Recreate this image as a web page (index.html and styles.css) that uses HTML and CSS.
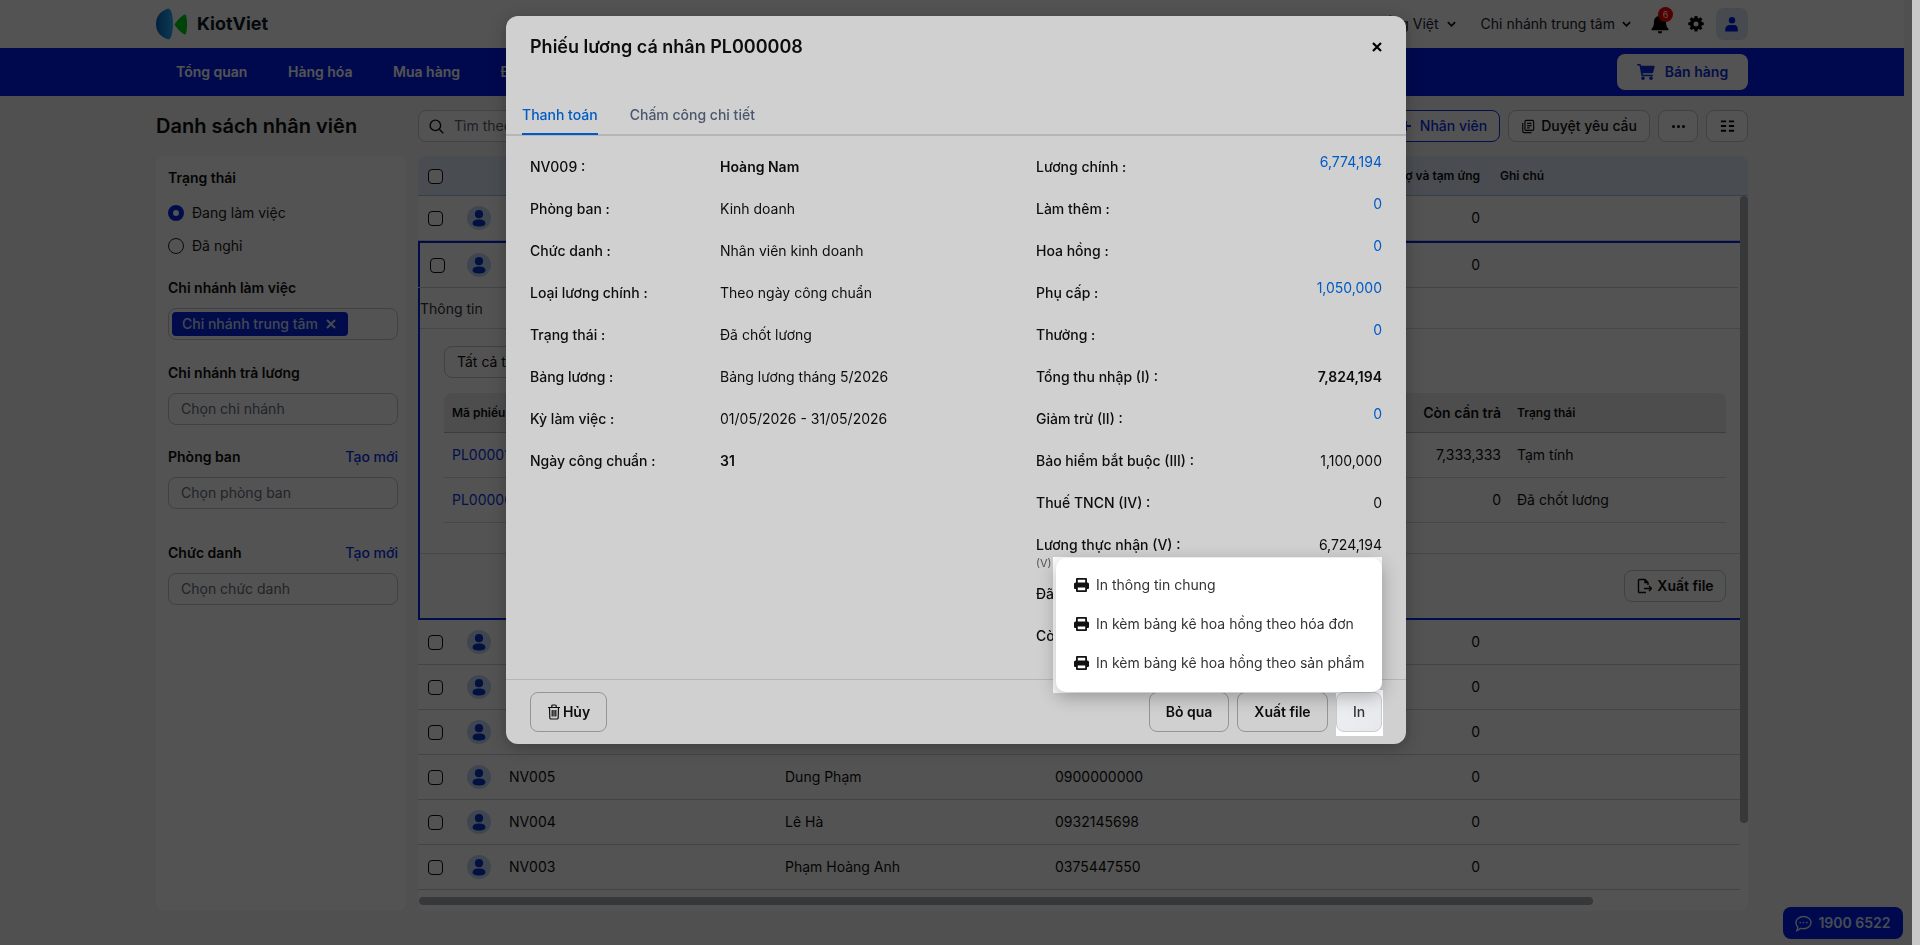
FILE: index.html
```html
<!DOCTYPE html>
<html lang="vi">
<head>
<meta charset="utf-8">
<title>KiotViet - Danh sách nhân viên</title>
<link rel="stylesheet" href="styles.css">
</head>
<body>
<svg class="defs" aria-hidden="true">
  <symbol id="i-person" viewBox="0 0 24 24"><circle cx="12" cy="8.2" r="4.1"/><path d="M5.6 17.4c0-2.6 2.2-3.9 6.4-3.9s6.4 1.3 6.4 3.9c0 2-2.400 3-6.400 3s-6.400-1-6.400-3z"/></symbol>
  <symbol id="i-print" viewBox="0 0 15 14"><path fill-rule="evenodd" d="M3 0h9a1 1 0 0 1 1 1v3.500h.5A1.500 1.500 0 0 1 15 6v4a1 1 0 0 1-1 1h-1v2a1 1 0 0 1-1 1H3a1 1 0 0 1-1-1v-2H1a1 1 0 0 1-1-1V6a1.500 1.500 0 0 1 1.500-1.500H2V1a1 1 0 0 1 1-1zM3.800 1.700v2.800h7.400V1.700zM3.800 9.500v2.800h7.400V9.500z"/></symbol>
</svg>

<div class="page">
  <header class="topbar">
    <div class="brand">
      <svg class="logo" viewBox="0 0 33 32"><defs><linearGradient id="lg" x1="0" y1="0" x2="1" y2="0"><stop offset="0" stop-color="#0068c0"/><stop offset="1" stop-color="#30b0ff"/></linearGradient></defs><path fill="url(#lg)" d="M13 0c3 1 4.500 8 4.500 16S16 31 13 32C5 30 0 24 0 16S5 2 13 0z"/><path fill="#00d020" d="M31 7c1.500 6 1.500 12 0 19-1 1-2 1-3 0-3-2-6-5-9-9.500 3-4.500 6-7.500 9-9.500 1-1 2-1 3 0z"/></svg>
      <span class="brand-name">KiotViet</span>
    </div>
    <div class="top-right">
      <svg class="top-promo"><use href="#i-person"/></svg>
      <span class="top-select">Tiếng Việt <svg class="chev" viewBox="0 0 10 6"><path d="M1 1l4 4 4-4" /></svg></span>
      <span class="top-select">Chi nhánh trung tâm <svg class="chev" viewBox="0 0 10 6"><path d="M1 1l4 4 4-4" /></svg></span>
      <span class="bell">
        <svg viewBox="0 0 18 20"><path d="M9 0a1.400 1.400 0 0 1 1.400 1.400v.7A5.800 5.800 0 0 1 15 7.800c0 4.400 1.200 5.800 2.400 7 .5.500.2 1.400-.6 1.400H1.200c-.8 0-1.100-.9-.6-1.400 1.200-1.200 2.400-2.600 2.400-7a5.800 5.800 0 0 1 4.600-5.700v-.7A1.400 1.400 0 0 1 9 0zM6.800 17.300h4.400a2.200 2.200 0 0 1-4.400 0z"/></svg>
        <span class="badge">6</span>
      </span>
      <svg class="gear" viewBox="0 0 16 16"><path fill-rule="evenodd" d="M6.700 0h2.600l.4 2.100 1 .4 1.800-1.200 1.900 1.900-1.200 1.800.4 1 2.100.4v2.600l-2.100.5-.4 1 1.200 1.700-1.900 1.900-1.800-1.200-1 .4-.4 2.200H6.700l-.4-2.200-1-.4-1.800 1.200-1.900-1.900 1.200-1.700-.4-1-2.100-.5V6.400l2.100-.4.4-1-1.200-1.800 1.900-1.900 1.800 1.200 1-.4zM8 5.500a2.500 2.500 0 1 0 0 5 2.500 2.500 0 0 0 0-5z"/></svg>
      <span class="user-box"><svg viewBox="0 0 16 16"><circle cx="8" cy="4.200" r="3.200"/><path d="M1.200 15v-1.500C1.200 10.500 3.500 9 5.500 9h5c2 0 3.300 1.500 3.300 4.500V15c0 .4-.3.600-.6.600H1.800c-.3 0-.6-.2-.6-.6z"/></svg></span>
    </div>
  </header>

  <nav class="navbar">
    <div class="nav-items">
      <a>Tổng quan</a><a>Hàng hóa</a><a>Mua hàng</a><a>Đơn hàng</a>
    </div>
    <button class="sell-btn">
      <svg viewBox="0 0 18 16"><path d="M0 .8C0 .4.300 0 .8 0h2c.6 0 1 .4 1.200 1l.2.800h12.500c.6 0 1.100.6.900 1.200l-1.500 5.500c-.1.500-.6.800-1.100.8H5.600l.3 1.400h9.400a.8.8 0 0 1 0 1.600H5.200c-.4 0-.7-.3-.8-.6L2.500 1.600H.8C.3 1.600 0 1.200 0 .8z"/><circle cx="6" cy="14.300" r="1.700"/><circle cx="14" cy="14.300" r="1.700"/></svg>
      Bán hàng
    </button>
  </nav>

  <main class="content">
    <div class="title-row">
      <h1>Danh sách nhân viên</h1>
      <div class="toolbar">
        <label class="search">
          <svg viewBox="0 0 16 16"><circle cx="6.800" cy="6.800" r="5.600"/><path d="M11 11l4.200 4.200"/></svg>
          <span>Tìm theo mã, tên nhân viên</span>
        </label>
        <div class="tool-group">
          <button class="btn btn-blue"><svg viewBox="0 0 12 12"><path d="M6 1v10M1 6h10"/></svg>Nhân viên</button>
          <button class="btn">
            <svg class="ic-doc" viewBox="0 0 16 16"><rect x="4.500" y="1" width="10" height="11.500" rx="1.500"/><path d="M2 4v9.500A1.500 1.500 0 0 0 3.500 15H12M7 4.500h5M7 7h5M7 9.500h3"/></svg>
            Duyệt yêu cầu
          </button>
          <button class="btn btn-sq dots"><i></i><i></i><i></i></button>
          <button class="btn btn-sq cols"><svg viewBox="0 0 16 14"><path d="M1 2h5.500M9.500 2H15M1 7h5.500M9.500 7H15M1 12h5.500M9.500 12H15"/></svg></button>
        </div>
      </div>
    </div>

    <div class="workspace">
      <aside class="filters">
        <h3 class="f-title">Trạng thái</h3>
        <div class="radio on"><i></i>Đang làm việc</div>
        <div class="radio"><i></i>Đã nghỉ</div>

        <h3 class="f-title g-work">Chi nhánh làm việc</h3>
        <div class="tagbox"><span class="tag">Chi nhánh trung tâm <svg viewBox="0 0 10 10"><path d="M1 1l8 8M9 1L1 9"/></svg></span></div>

        <h3 class="f-title g-pay">Chi nhánh trả lương</h3>
        <div class="input">Chọn chi nhánh</div>

        <div class="f-head g-dept"><h3 class="f-title">Phòng ban</h3><a>Tạo mới</a></div>
        <div class="input">Chọn phòng ban</div>

        <div class="f-head g-role"><h3 class="f-title">Chức danh</h3><a>Tạo mới</a></div>
        <div class="input">Chọn chức danh</div>
      </aside>

      <section class="table">
        <div class="t-head row-grid">
          <span class="cb"></span><span></span><span></span><span></span><span></span>
          <span class="num">Nợ và tạm ứng</span><span class="note">Ghi chú</span>
        </div>
        <div class="t-row row-grid"><span class="cb"></span><svg class="ava"><use href="#i-person"/></svg><span></span><span></span><span></span><span class="num">0</span></div>

        <div class="expanded">
          <div class="t-row row-grid first"><span class="cb"></span><svg class="ava"><use href="#i-person"/></svg><span></span><span></span><span></span><span class="num">0</span></div>
          <div class="d-tabs">Thông tin</div>
          <div class="d-body">
            <div class="d-select">Tất cả trạng thái</div>
            <div class="d-table">
              <div class="d-head d-grid"><span>Mã phiếu</span><b class="num">Còn cần trả</b><span>Trạng thái</span></div>
              <div class="d-row d-grid"><a>PL000010</a><span class="num">7,333,333</span><span>Tạm tính</span></div>
              <div class="d-row d-grid"><a>PL000008</a><span class="num">0</span><span>Đã chốt lương</span></div>
            </div>
          </div>
          <div class="d-foot">
            <button class="btn btn-export">
              <svg viewBox="0 0 16 16"><path d="M10 14.500H3.500a1 1 0 0 1-1-1v-11a1 1 0 0 1 1-1h5.500L12 4.500V7M9 1.500v3h3M8 10.500h7.500M13 8l2.500 2.500L13 13"/></svg>
              Xuất file
            </button>
          </div>
        </div>

        <div class="t-row row-grid"><span class="cb"></span><svg class="ava"><use href="#i-person"/></svg><span></span><span></span><span></span><span class="num">0</span></div>
        <div class="t-row row-grid"><span class="cb"></span><svg class="ava"><use href="#i-person"/></svg><span></span><span></span><span></span><span class="num">0</span></div>
        <div class="t-row row-grid"><span class="cb"></span><svg class="ava"><use href="#i-person"/></svg><span></span><span></span><span></span><span class="num">0</span></div>
        <div class="t-row row-grid"><span class="cb"></span><svg class="ava"><use href="#i-person"/></svg><span>NV005</span><span>Dung Phạm</span><span>0900000000</span><span class="num">0</span></div>
        <div class="t-row row-grid"><span class="cb"></span><svg class="ava"><use href="#i-person"/></svg><span>NV004</span><span>Lê Hà</span><span>0932145698</span><span class="num">0</span></div>
        <div class="t-row row-grid"><span class="cb"></span><svg class="ava"><use href="#i-person"/></svg><span>NV003</span><span>Phạm Hoàng Anh</span><span>0375447550</span><span class="num">0</span></div>
        <div class="sb-v"></div>
        <div class="sb-h"></div>
      </section>
    </div>
  </main>

  <button class="chat">
    <svg viewBox="0 0 18 18"><path d="M9 1.500c4.400 0 8 2.900 8 6.500s-3.600 6.500-8 6.500c-1 0-1.900-.1-2.800-.4L2 16.500l1-3.700C1.800 11.600 1 9.900 1 8c0-3.600 3.600-6.500 8-6.500z"/><circle class="dot" cx="5.500" cy="8" r=".9"/><circle class="dot" cx="9" cy="8" r=".9"/><circle class="dot" cx="12.500" cy="8" r=".9"/></svg>
    1900 6522
  </button>
</div>
<div class="rail"></div>

<div class="scrim-page"></div>

<div class="modal">
  <div class="m-head">
    <h2>Phiếu lương cá nhân PL000008</h2>
    <svg class="m-close" viewBox="0 0 10 10"><path d="M1 1l8 8M9 1L1 9"/></svg>
  </div>
  <div class="m-tabs">
    <a class="active">Thanh toán</a><a>Chấm công chi tiết</a>
  </div>
  <div class="m-body">
    <dl class="col-left">
      <div><dt>NV009 :</dt><dd class="strong">Hoàng Nam</dd></div>
      <div><dt>Phòng ban :</dt><dd>Kinh doanh</dd></div>
      <div><dt>Chức danh :</dt><dd>Nhân viên kinh doanh</dd></div>
      <div><dt>Loại lương chính :</dt><dd>Theo ngày công chuẩn</dd></div>
      <div><dt>Trạng thái :</dt><dd>Đã chốt lương</dd></div>
      <div><dt>Bảng lương :</dt><dd>Bảng lương tháng 5/2026</dd></div>
      <div><dt>Kỳ làm việc :</dt><dd>01/05/2026 - 31/05/2026</dd></div>
      <div><dt>Ngày công chuẩn :</dt><dd class="strong">31</dd></div>
    </dl>
    <dl class="col-right">
      <div><dt>Lương chính :</dt><dd class="link">6,774,194</dd></div>
      <div><dt>Làm thêm :</dt><dd class="link">0</dd></div>
      <div><dt>Hoa hồng :</dt><dd class="link">0</dd></div>
      <div><dt>Phụ cấp :</dt><dd class="link">1,050,000</dd></div>
      <div><dt>Thưởng :</dt><dd class="link">0</dd></div>
      <div><dt>Tổng thu nhập (I) :</dt><dd class="strong">7,824,194</dd></div>
      <div><dt>Giảm trừ (II) :</dt><dd class="link">0</dd></div>
      <div><dt>Bảo hiểm bắt buộc (III) :</dt><dd>1,100,000</dd></div>
      <div><dt>Thuế TNCN (IV) :</dt><dd>0</dd></div>
      <div class="row-note"><dt>Lương thực nhận (V) :<small>(V) = (I) - (II) - (III) - (IV)</small></dt><dd>6,724,194</dd></div>
      <div><dt>Đã thanh toán :</dt><dd></dd></div>
      <div><dt>Còn cần trả :</dt><dd></dd></div>
    </dl>
  </div>
  <div class="m-foot">
    <button class="btn m-btn m-cancel">
      <svg viewBox="0 0 14 16"><path d="M1 3.500h12M4.800 3.500V2a1 1 0 0 1 1-1h2.400a1 1 0 0 1 1 1v1.500M2.500 3.500l.3 10.300a1.200 1.200 0 0 0 1.200 1.200h6a1.200 1.200 0 0 0 1.200-1.200l.3-10.300M5.200 6v6.500M7 6v6.500M8.800 6v6.500"/></svg>
      Hủy
    </button>
    <div class="m-actions">
      <button class="btn m-btn m-skip">Bỏ qua</button>
      <button class="btn m-btn m-file">Xuất file</button>
      <div class="print-spot">
        <button class="btn m-btn print-btn">In</button>
        <ul class="print-menu">
          <li><svg><use href="#i-print"/></svg>In thông tin chung</li>
          <li><svg><use href="#i-print"/></svg>In kèm bảng kê hoa hồng theo hóa đơn</li>
          <li><svg><use href="#i-print"/></svg>In kèm bảng kê hoa hồng theo sản phẩm</li>
        </ul>
      </div>
    </div>
  </div>
</div>

<div class="scrim-focus"></div>
</body>
</html>
```

FILE: styles.css
```css
* { box-sizing: border-box; }
html, body { margin: 0; height: 945px; overflow: hidden; }
body {
  display: flex;
  font: 14px/20px Inter, "Noto Sans", sans-serif;
  color: #111;
  background: #f2f5f3;
}
.defs { display: none; }
button { font: inherit; color: inherit; background: none; border: 0; padding: 0; }
h1, h2, h3, dl, dd, ul { margin: 0; padding: 0; }
a { color: inherit; }

.page { width: 1912px; flex: none; }
.rail { width: 8px; flex: none; background: #f6f6f6; }

/* Top bar */
.topbar {
  width: 1904px; height: 48px; padding: 0 156px;
  display: flex; align-items: center; justify-content: space-between;
  background: #fff;
}
.brand { display: flex; align-items: center; gap: 9px; }
.logo { width: 32px; height: 32px; }
.brand-name { font-size: 18px; font-weight: 700; color: #0d1b2a; }
.top-right { display: flex; align-items: center; }
.top-promo { width: 20px; height: 20px; fill: #0a35e6; margin-right: 251px; }
.top-select { display: flex; align-items: center; gap: 8px; margin-right: 23px; color: #1c2430; }
.top-select + .top-select { margin-left: 2px; gap: 7px; }
.chev { width: 9px; height: 6px; fill: none; stroke: #111; stroke-width: 2; }
.bell { position: relative; display: block; width: 18px; height: 20px; margin: 0 19px 0 -3px; }
.bell svg { display: block; width: 18px; height: 20px; fill: #000; }
.badge {
  position: absolute; left: 7px; top: -7px;
  width: 15px; height: 15px; border-radius: 50%;
  background: #ff0000; color: #fff; font-size: 9px; line-height: 15px; text-align: center;
}
.gear { width: 16px; height: 16px; fill: #000; margin-right: 12px; }
.user-box {
  width: 32px; height: 32px; border-radius: 8px; background: #dce6f7;
  display: flex; align-items: center; justify-content: center;
}
.user-box svg { width: 16px; height: 16px; fill: #001fef; }

/* Nav */
.navbar {
  width: 1904px; height: 48px; padding: 0 156px 0 176px;
  display: flex; align-items: center; justify-content: space-between;
  background: #001fef;
}
.nav-items { display: flex; gap: 40.500px; }
.nav-items a { color: #fff; font-weight: 600; }
.sell-btn {
  width: 131px; height: 36px; border-radius: 8px; background: #fff;
  display: flex; align-items: center; justify-content: center; gap: 10px;
  color: #0f2ee0; font-weight: 600;
}
.sell-btn svg { width: 18px; height: 16px; fill: #0f2ee0; }

/* Content */
.content { width: 1904px; padding: 14px 156px 0; }
.title-row { display: flex; height: 32px; align-items: center; }
h1 { width: 262px; font-size: 20px; line-height: 32px; font-weight: 600; flex: none; }
.toolbar { flex: 1; display: flex; justify-content: space-between; }
.search {
  width: 400px; height: 32px; padding: 0 10px; background: #fff;
  display: flex; align-items: center; gap: 10px;
  border: 1px solid #c9ced6; border-radius: 8px; color: #5b6472;
}
.search svg { width: 15px; height: 15px; fill: none; stroke: #111; stroke-width: 1.500; flex: none; }
.tool-group { display: flex; gap: 8px; }
.btn {
  height: 32px; padding: 0 12px; background: #fff;
  display: inline-flex; align-items: center; gap: 6px;
  border: 1px solid #c3c8d0; border-radius: 8px; font-weight: 500; white-space: nowrap;
}
.btn-blue { width: 120px; justify-content: flex-end; border-color: #0a35e6; color: #0a35e6; padding-right: 12px; gap: 8px; }
.btn-blue svg { width: 12px; height: 12px; fill: none; stroke: #0a35e6; stroke-width: 1.800; flex: none; }
.ic-doc { width: 14px; height: 15px; fill: none; stroke: #111; stroke-width: 1.300; }
.btn-sq { width: 40px; padding: 0; justify-content: center; }
.cols { width: 42px; }
.cols svg { width: 15px; height: 14px; fill: none; stroke: #000; stroke-width: 2; }
.dots { gap: 2px; }
.dots i { width: 3px; height: 3px; border-radius: 50%; background: #000; }

.workspace { display: flex; gap: 12px; margin-top: 14px; height: 755px; }

/* Filters */
.filters { width: 250px; flex: none; padding: 12px 8px 0 12px; border-radius: 8px; background: #fff; }
.f-title { font-size: 14px; line-height: 20px; font-weight: 600; }
.radio { display: flex; align-items: center; gap: 8px; margin-top: 13px; height: 20px; color: #222; }
.f-title + .radio { margin-top: 15px; }
.radio i { width: 16px; height: 16px; border-radius: 50%; border: 1px solid #222; flex: none; background: #fff; }
.radio.on i { background: #fff; border: 5px solid #0a26e8; }
.g-work { margin-top: 22px; }
.tagbox {
  height: 32px; margin-top: 10px; padding: 3px 3px;
  border: 1px solid #c3c8d0; border-radius: 8px;
}
.tag {
  display: inline-flex; align-items: center; gap: 8px; height: 24px; width: 176px; padding: 0 10px;
  border-radius: 4px; background: #0a26e8; color: #c8dcff; font-weight: 500;
}
.tag svg { width: 10px; height: 10px; fill: none; stroke: #d6e4ff; stroke-width: 2; }
.g-pay { margin-top: 23px; }
.input {
  height: 32px; margin-top: 10px; padding: 0 12px;
  border: 1px solid #c3c8d0; border-radius: 8px; line-height: 30px; color: #667080;
}
.f-head { display: flex; justify-content: space-between; }
.f-head a { color: #0a35e6; font-weight: 500; }
.g-dept { margin-top: 22px; }
.g-role { margin-top: 34px; }

/* Table */
.table { position: relative; flex: 1; border-radius: 8px; background: #fff; overflow: hidden; }
.row-grid {
  display: grid;
  grid-template-columns: 49px 42px 276px 270px 300px 125px 1fr;
  align-items: center;
}
.t-head {
  height: 40px; background: #e2ecfb; border-bottom: 1px solid #a8c4e8;
  font-size: 12px; font-weight: 600;
}
.t-head .cb { margin-top: 1px; }
.t-head .note { padding-left: 20px; }
.t-row { width: 1322px; height: 45px; border-bottom: 1px solid #cfd3d8; color: #111; }
.t-row.first { height: 45px; margin-left: -2px; width: 1320px; }
.cb { display: block; width: 15px; height: 15px; margin-left: 10px; border: 1px solid #111; border-radius: 4px; background: #fff; }
.t-row.first .cb { margin-left: 12px; }
.ava { width: 24px; height: 24px; border-radius: 50%; background: #c5d8f5; fill: #0a35c8; }
.num { text-align: right; }

.expanded {
  width: 1322px; height: 379px;
  border: 2px solid #0a26e8; border-right: 0;
}
.d-tabs {
  height: 41px; line-height: 41px;
  border-bottom: 1px solid #d6dae0; color: #333;
}
.d-body { height: 225px; padding: 17px 14px 0 24px; border-bottom: 1px solid #d6dae0; }
.d-select {
  width: 150px; height: 32px; padding: 0 12px; line-height: 30px;
  border: 1px solid #c3c8d0; border-radius: 8px;
}
.d-table { margin-top: 15px; }
.d-grid { display: grid; grid-template-columns: 300px 749px 1fr; padding-left: 8px; }
.d-grid > .num { justify-self: end; }
.d-grid > :nth-child(3) { padding-left: 16px; }
.d-head {
  height: 40px; align-items: center; background: #edeef0; border-radius: 8px 8px 0 0;
  border-bottom: 1px solid #b9bcc2; font-size: 12px; font-weight: 600;
}
.d-head b { font-size: 14px; font-weight: 600; }
.d-row { height: 45px; align-items: center; border-bottom: 1px solid #d6dae0; }
.d-row a { color: #0a35e6; }
.d-foot { height: 64px; padding: 16px 14px 0 0; display: flex; justify-content: flex-end; align-items: flex-start; }
.btn-export { width: 102px; padding: 0; justify-content: center; font-weight: 600; gap: 5px; }
.btn-export svg { width: 16px; height: 16px; fill: none; stroke: #111; stroke-width: 1.400; flex: none; }

.sb-v { position: absolute; right: 0; top: 40px; width: 8px; height: 627px; border-radius: 4px; background: #a8acb5; }
.sb-h { position: absolute; left: 1px; top: 741px; width: 1174px; height: 8px; border-radius: 4px; background: #a8acb5; }

.chat {
  position: absolute; left: 1783px; top: 907px;
  width: 120px; height: 32px; border-radius: 8px; background: #001fef;
  display: flex; align-items: center; justify-content: center; gap: 6px;
  color: #dfe8ff; font-weight: 600;
}
.chat svg { width: 17px; height: 17px; fill: none; stroke: #dfe8ff; stroke-width: 1.500; }
.chat .dot { fill: #dfe8ff; stroke: none; }

/* Scrims */
.scrim-page { position: fixed; left: 0; top: 0; width: 1912px; height: 945px; background: rgba(0,0,0,.6); }
.scrim-focus { position: fixed; left: 0; top: 0; width: 1920px; height: 945px; background: rgba(0,0,0,.185); }

/* Modal */
.modal {
  position: absolute; left: 506px; top: 16px;
  width: 900px; height: 728px; border-radius: 12px; background: #fff;
  box-shadow: 0 4px 16px rgba(0,0,0,.25);
  display: flex; flex-direction: column;
}
.m-head { height: 60px; padding: 15px 24px 0; display: flex; justify-content: space-between; }
.m-head h2 { font-size: 18px; line-height: 32px; font-weight: 600; }
.m-close { width: 10px; height: 10px; margin: 11px 0 0; fill: none; stroke: #000; stroke-width: 2.200; }
.m-tabs {
  height: 60px; padding: 0 16px 0 16px; display: flex; gap: 32px; align-items: flex-end;
  border-bottom: 2px solid #e0e0e0; color: #5b6b85; font-weight: 500;
}
.m-tabs a { height: 30px; line-height: 20px; margin-bottom: -1px; }
.m-tabs .active { color: #0070f4; border-bottom: 2px solid #0070f4; }
.m-body { flex: 1; display: flex; padding: 10px 24px 0; }
.col-left { width: 506px; flex: none; }
.col-right { flex: 1; }
dl > div { display: flex; height: 42px; align-items: center; }
dl > .row-note { margin-bottom: 7px; }
dt { position: relative; font-weight: 500; }
.col-left dt { width: 190px; flex: none; }
.col-right dt { flex: 1; }
dd.strong { font-weight: 600; }
.col-right dd { text-align: right; }
dd.link { color: #0070f4; margin-top: -10px; }
dt small { position: absolute; left: 0; top: 18px; white-space: nowrap; font-size: 11px; font-weight: 400; color: #666; }
.m-foot {
  height: 65px; padding: 12px 24px 0;
  border-top: 1px solid #dedede;
  display: flex; justify-content: space-between; align-items: flex-start;
}
.m-btn { height: 40px; padding: 0 16px; font-weight: 600; border-color: #b3b7bd; color: #111; }
.m-btn svg { width: 14px; height: 16px; fill: none; stroke: #111; stroke-width: 1.200; flex: none; }
.m-cancel { width: 77px; padding: 0; justify-content: center; gap: 2px; }
.m-skip { width: 80px; padding: 0; justify-content: center; }
.m-file { width: 91px; padding: 0; justify-content: center; }
.m-actions { display: flex; gap: 8px; }
.print-spot {
  position: relative; z-index: 30; width: 47px; height: 46px; margin: -2px -1px 0 0;
  background: #fff; padding: 2px 1px 0 0;
}
.print-btn {
  width: 46px; padding: 0; justify-content: center; font-weight: 500; color: #333;
  background: linear-gradient(135deg, #eef0f2, #e6e8ec); border-color: #c8ccd2;
}
.print-menu {
  position: absolute; right: 1px; bottom: 44px;
  width: 326px; height: 134px; padding: 7px 16px 0 18px; list-style: none; background: #fff;
  border-radius: 10px;
  box-shadow: 0 5px 18px rgba(0,0,0,.28);
  color: #333;
}
.print-menu::before {
  content: ""; position: absolute; z-index: -1; left: -3px; top: -1px; right: 0; bottom: -1px;
  background: #fff; border-bottom-right-radius: 10px;
}
.print-menu li { display: flex; align-items: center; gap: 7px; height: 39px; white-space: nowrap; }
.print-menu svg { width: 15px; height: 14px; fill: #111; flex: none; }
```
